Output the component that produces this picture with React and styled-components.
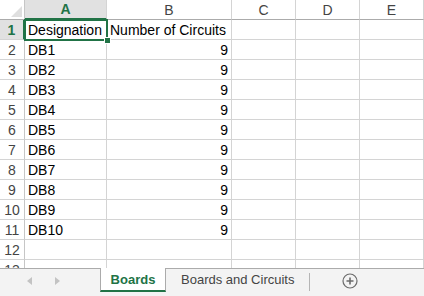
import React from 'react'
import styled, { createGlobalStyle } from 'styled-components'

const GlobalStyle = createGlobalStyle`
  html, body {
    margin: 0;
    padding: 0;
    background: #fff;
  }
  * {
    box-sizing: border-box;
  }
`

const columns = ['A', 'B', 'C', 'D', 'E']

const rows = [
  ['Designation', 'Number of Circuits'],
  ['DB1', 9],
  ['DB2', 9],
  ['DB3', 9],
  ['DB4', 9],
  ['DB5', 9],
  ['DB6', 9],
  ['DB7', 9],
  ['DB8', 9],
  ['DB9', 9],
  ['DB10', 9],
  ['', ''],
  ['', ''],
]

const App = () => {
  return (
    <Window>
      <GlobalStyle />
      <Sheet>
        <Corner>
          <svg width="24" height="19" viewBox="0 0 24 19">
            <polygon points="22,6 22,17 11,17" fill="#dfdfdf" />
          </svg>
        </Corner>
        {columns.map((c, i) => (
          <ColHeader key={c} $active={i === 0}>{c}</ColHeader>
        ))}
        {rows.map((r, i) => (
          <React.Fragment key={i}>
            <RowHeader $active={i === 0}>{i + 1}</RowHeader>
            <Cell>{r[0]}</Cell>
            <Cell $number={typeof r[1] === 'number'}>{r[1]}</Cell>
            <Cell />
            <Cell />
            <Cell />
          </React.Fragment>
        ))}
        <Selection>
          <Handle />
        </Selection>
      </Sheet>
      <TabBar>
        <Nav>
          <Arrow $dir="left" />
          <Arrow $dir="right" />
        </Nav>
        <Tab $active>Boards</Tab>
        <Tab>Boards and Circuits</Tab>
        <Divider />
        <AddButton>
          <svg width="16" height="16" viewBox="0 0 16 16">
            <circle cx="8" cy="8" r="7" fill="none" stroke="#6b6b6b" strokeWidth="1.2" />
            <path d="M8 4.5v7M4.5 8h7" stroke="#6b6b6b" strokeWidth="1.6" />
          </svg>
        </AddButton>
      </TabBar>
    </Window>
  )
}

const Window = styled.div`
  width: 424px;
  height: 296px;
  display: flex;
  flex-direction: column;
  overflow: hidden;
  font-family: "Liberation Sans", Arial, sans-serif;
`

const Sheet = styled.div`
  position: relative;
  height: 268px;
  overflow: hidden;
  display: grid;
  grid-template-columns: 25px 82px 125px 64px 64px 64px;
  grid-auto-rows: 20px;
  background: #fff;
`

const Corner = styled.div`
  border-right: 1px solid #c6c6c6;
  border-bottom: 1px solid #ababab;
  display: flex;
`

const ColHeader = styled.div`
  display: flex;
  align-items: center;
  justify-content: center;
  font-size: 14px;
  color: ${p => (p.$active ? '#217346' : '#444')};
  font-weight: ${p => (p.$active ? 700 : 400)};
  background: ${p => (p.$active ? '#e1e1e1' : '#fff')};
  border-right: 1px solid #d4d4d4;
  border-bottom: ${p => (p.$active ? '2px solid #217346' : '1px solid #ababab')};
`

const RowHeader = styled.div`
  display: flex;
  align-items: center;
  justify-content: center;
  font-size: 14px;
  color: ${p => (p.$active ? '#217346' : '#444')};
  font-weight: ${p => (p.$active ? 700 : 400)};
  background: ${p => (p.$active ? '#e1e1e1' : '#fff')};
  border-right: ${p => (p.$active ? '2px solid #217346' : '1px solid #c6c6c6')};
  border-bottom: 1px solid #d4d4d4;
`

const Cell = styled.div`
  display: flex;
  align-items: center;
  justify-content: ${p => (p.$number ? 'flex-end' : 'flex-start')};
  padding: 0 3px;
  font-size: 14px;
  color: #000;
  white-space: nowrap;
  border-right: 1px solid #d4d4d4;
  border-bottom: 1px solid #d4d4d4;
`

const Selection = styled.div`
  position: absolute;
  left: 24px;
  top: 19px;
  width: 84px;
  height: 22px;
  border: 2px solid #217346;
  pointer-events: none;
`

const Handle = styled.div`
  position: absolute;
  right: -5px;
  bottom: -5px;
  width: 7px;
  height: 7px;
  background: #217346;
  border: 1px solid #fff;
`

const TabBar = styled.div`
  flex: 1;
  display: flex;
  align-items: stretch;
  background: #f3f3f3;
  border-top: 1px solid #ababab;
  padding-bottom: 4px;
`

const Nav = styled.div`
  width: 100px;
  display: flex;
  align-items: center;
  gap: 23px;
  padding-left: 27px;
`

const Arrow = styled.span`
  width: 0;
  height: 0;
  border-top: 4px solid transparent;
  border-bottom: 4px solid transparent;
  ${p => (p.$dir === 'left' ? 'border-right: 5px solid #c3c3c3;' : 'border-left: 5px solid #c3c3c3;')}
`

const Tab = styled.div`
  display: flex;
  align-items: center;
  justify-content: center;
  font-size: 13px;
  white-space: nowrap;
  padding: ${p => (p.$active ? '0' : '0 15px')};
  width: ${p => (p.$active ? '66px' : 'auto')};
  margin-top: ${p => (p.$active ? '-1px' : '0')};
  color: ${p => (p.$active ? '#217346' : '#444')};
  font-weight: ${p => (p.$active ? 700 : 400)};
  background: ${p => (p.$active ? '#fff' : 'transparent')};
  border-left: ${p => (p.$active ? '1px solid #ababab' : 'none')};
  border-right: ${p => (p.$active ? '1px solid #ababab' : 'none')};
  border-bottom: ${p => (p.$active ? '2px solid #217346' : '2px solid transparent')};
`

const Divider = styled.div`
  width: 1px;
  margin: 4px 0 1px;
  background: #b5b5b5;
`

const AddButton = styled.div`
  display: flex;
  align-items: center;
  padding-left: 32px;
  padding-top: 1px;
`

export default App
